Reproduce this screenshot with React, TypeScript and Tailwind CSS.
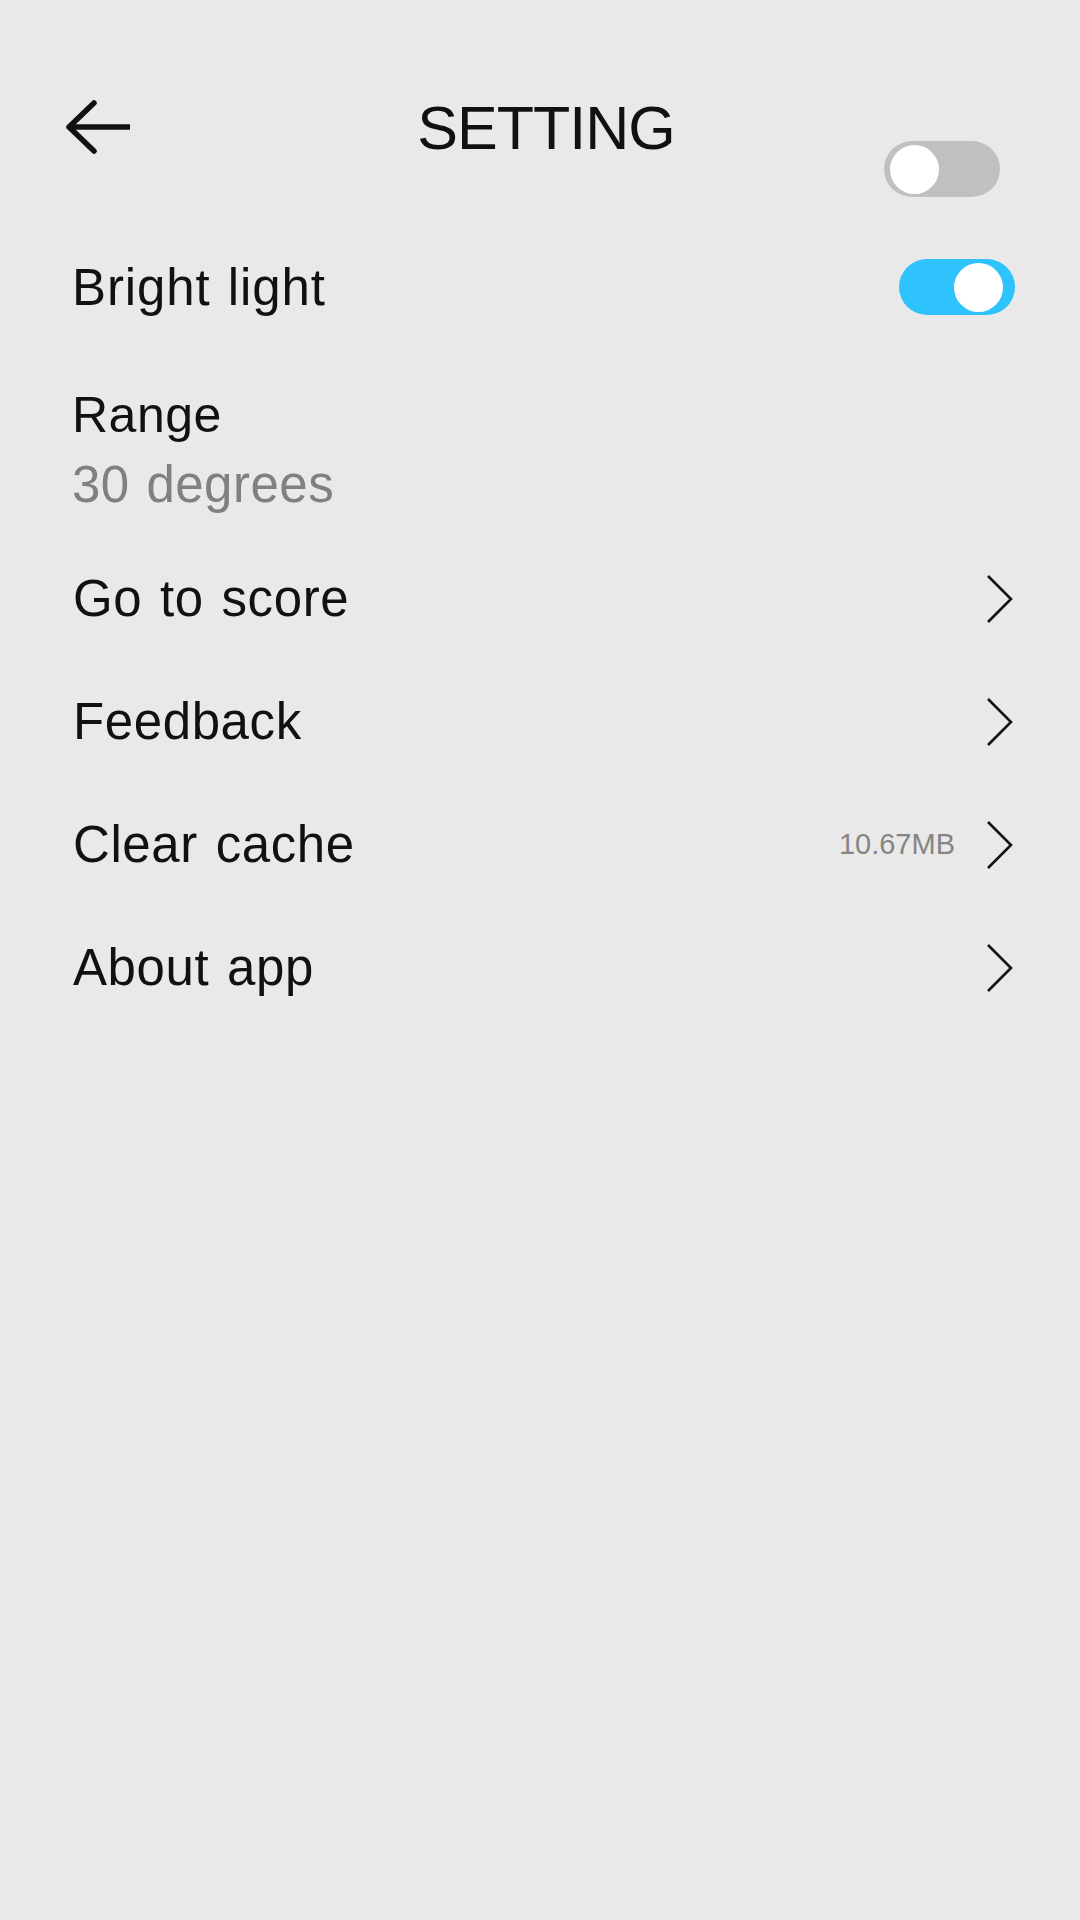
import React from "react";

const font = { fontFamily: '"Liberation Sans", Arial, sans-serif' };

function Chevron() {
  return (
    <svg width="28" height="50" viewBox="0 0 28 50" fill="none">
      <path d="M2 2 L25 25 L2 48" stroke="#111" strokeWidth="2.6" strokeLinejoin="miter" />
    </svg>
  );
}

function Toggle({ on }: { on: boolean }) {
  return (
    <div
      className={`flex h-[56px] w-[116px] items-center rounded-full ${
        on ? "justify-end bg-[#2ec3fc] pr-[12px]" : "justify-start bg-[#c0c0c0] pl-[6px]"
      }`}
    >
      <div className="h-[49px] w-[49px] rounded-full bg-white" />
    </div>
  );
}

export default function App() {
  const links = [
    { label: "Go to score" },
    { label: "Feedback" },
    { label: "Clear cache", extra: "10.67MB" },
    { label: "About app" },
  ];

  return (
    <div className="min-h-[1920px] w-[1080px] bg-[#e9e9e9] text-[#111]" style={font}>
      {/* Header */}
      <div className="grid h-[230px] grid-cols-[1fr_auto_1fr] items-start pl-[65px] pr-[53px] pt-[100px]">
        <svg width="66" height="54" viewBox="0 0 66 54" fill="none">
          <path d="M29 3 L4 27 L29 51" stroke="#111" strokeWidth="5.5" strokeLinecap="round" strokeLinejoin="round" />
          <path d="M5 27 H65" stroke="#111" strokeWidth="5.5" />
        </svg>
        <div className="-mt-[2px] text-[61px] leading-[61px] tracking-[-1px]">SETTING</div>
        <div className="mt-[41px] mr-[27px] flex justify-end">
          <Toggle on={false} />
        </div>
      </div>

      {/* Bright light */}
      <div className="flex h-[114px] items-center justify-between pl-[72px] pr-[65px]">
        <span className="text-[51px] leading-none tracking-[0.9px] [word-spacing:2px]">Bright light</span>
        <Toggle on={true} />
      </div>

      {/* Range */}
      <div className="mt-[36px] pl-[72px]">
        <div className="text-[50px] leading-[70px] tracking-[0.5px]">Range</div>
        <div className="text-[51px] leading-[70px] tracking-[0.5px] text-[#808080] [word-spacing:2px]">30 degrees</div>
      </div>

      {/* Links */}
      <div className="mt-[17px]">
        {links.map((item) => (
          <div key={item.label} className="flex h-[123px] items-center justify-between pl-[73px] pr-[66px]">
            <span className="text-[51px] leading-none tracking-[0.6px] [word-spacing:3px]">{item.label}</span>
            <div className="flex items-center gap-[31px]">
              {item.extra && <span className="text-[29px] leading-none text-[#858585]">{item.extra}</span>}
              <Chevron />
            </div>
          </div>
        ))}
      </div>
    </div>
  );
}
